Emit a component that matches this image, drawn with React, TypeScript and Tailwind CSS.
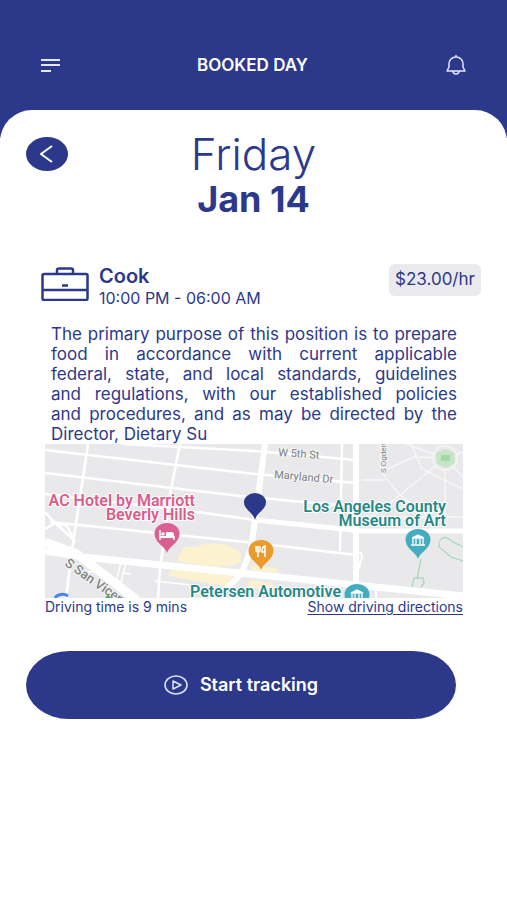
import type { ReactNode } from 'react'

type Job = {
    title: string
    hours: string
    rate: string
    description: string
    driving: string
}

const job: Job = {
    title: 'Cook',
    hours: '10:00 PM - 06:00 AM',
    rate: '$23.00/hr',
    description:
        'The primary purpose of this position is to prepare food in accordance with current applicable federal, state, and local standards, guidelines and\u00a0regulations, with our established policies and\u00a0procedures, and as may be directed by the Director, Dietary Su',
    driving: 'Driving time is 9 mins',
}

function Pin({ x, y, color, children }: { x: number; y: number; color: string; children?: ReactNode }) {
    return (
        <g transform={`translate(${x} ${y})`}>
            <path d="M0 18C-2 11-12.500 8-12.500-1.500A12.500 10.500 0 0 1 12.500-1.500C12.500 8 2 11 0 18Z" fill={color} />
            {children}
        </g>
    )
}

function Museum() {
    return (
        <g fill="none" stroke="#fff" strokeWidth="1.300">
            <path d="M-6-3 0-6 6-3Z" fill="#fff" />
            <path d="M-5-2V4M-2-2V3M2-2V3M5-2V4M-7 4H7" />
        </g>
    )
}

function AreaMap() {
    return (
        <svg viewBox="0 0 418 154" className="block w-full overflow-hidden bg-[#e9e9eb]" role="img" aria-label="Map">
            {/* Points of interest area */}
            <path d="M139 103H152C158 98 183 99 188 104C198 106 199 118 190 121L174 123 134 118C130 113 136 111 139 103Z" fill="#fcf2d0" />
            <path d="M127 123 190 130 180 142 123 132ZM205 121 232 124 234 129 206 126ZM205 136 228 139V146L202 143Z" fill="#fcf2d0" />

            {/* Side streets */}
            <g fill="none" stroke="#fff" strokeWidth="2.500">
                <path d="M78 0 210 7 311 16M0 6 210 30 311 39M0 29 195 52 311 63M0 50 152 68 210 76M5 78 210 99 311 111" />
                <path d="M43 0 27 106 21 154M135 0 125 50 115 125 113 154M297 0 295 107" />
                <path d="M0 68 10 79 28 95M10 79 0 85M10 79 22 82 30 98" />
                <path d="M76 118 71 139M81 119 75 142M78 129 86 130M110 137 154 142M30 130 52 127" strokeWidth="1.500" />
                <path d="M311 108C318 107 318 113 315 119C315 124 314 126 311 126M331 142V154" strokeWidth="2" />
            </g>
            <g fill="none" stroke="#f6f6f7" strokeWidth="1.500">
                <path d="M400 14 361 0M400 14 355 51 336 28V0M400 14 418 33M400 14V73M400 14 418 8M400 14 369 13 336 28M355 51 311 85M355 51 384 73M317 36 340 36M311 73H418M366 0 377 25 418 45" />
            </g>
            <circle cx="400" cy="14" r="12" fill="#e9e9eb" stroke="#f6f6f7" strokeWidth="1.500" />
            <path d="M391 9 400 5 409 9 410 19 401 24 392 20Z" fill="#c5e5c6" />
            <path d="M396 11H405V17H396Z" fill="#a6d8aa" />

            {/* Main roads */}
            <g fill="none" stroke="#fff" strokeLinejoin="round">
                <path d="M0 98 32 110 92 156" strokeWidth="9" />
                <path d="M0 107 38 113 205 130 418 152" strokeWidth="7" />
                <path d="M220 0 210 76 206 104 197 129 179 147" strokeWidth="6" />
                <path d="M210 76 318 87H418" strokeWidth="5" />
                <path d="M311 0V146" strokeWidth="6" />
            </g>
            <g fill="none" stroke="#a9d9bb" strokeWidth="1.300">
                <path d="M376 115 372 135M369 134H378L379 139 376 143M369 134 367 143" />
                <path d="M418 117 406 113 394 103C393 96 398 91 404 95C409 100 412 99 418 103" />
            </g>

            {/* Street names */}
            <g fontFamily="Roboto, sans-serif" fill="#808285" stroke="#f4f4f4" strokeWidth="2" paintOrder="stroke" fontSize="11">
                <text transform="translate(233 12) rotate(4)">W 5th St</text>
                <text transform="translate(229 34) rotate(5)">Maryland Dr</text>
                <text transform="translate(341 29) rotate(-90)" fontSize="8">S Ogden</text>
                <text transform="translate(19 121) rotate(35)" fontSize="13" fontWeight="500">S San Vicente</text>
            </g>

            {/* Place names */}
            <g fontFamily="Roboto, sans-serif" fontWeight="600" fontSize="16" stroke="#fff" strokeWidth="2" paintOrder="stroke">
                <g fill="#d95d8b" textAnchor="end">
                    <text x="150" y="62">AC Hotel by Marriott</text>
                    <text x="150" y="76">Beverly Hills</text>
                </g>
                <g fill="#278886" textAnchor="end">
                    <text x="401" y="68">Los Angeles County</text>
                    <text x="401" y="82">Museum of Art</text>
                    <text x="296" y="153">Petersen Automotive</text>
                </g>
            </g>

            <Pin x={122} y={91} color="#dc5f91">
                <path d="M-7-5V5M7 5V1" fill="none" stroke="#fff" strokeWidth="1.500" />
                <path d="M-7 1H7V3H-7ZM-1-3H4Q7-3 7 0V1H-1Z" fill="#fff" />
                <circle cx="-4" cy="-1" r="1.800" fill="#fff" />
            </Pin>
            <Pin x={216} y={108} color="#e99b2d">
                <path d="M-5-6V-2Q-5 0-3 0T-1-2V-6M-3-6V5M4 5V-6Q1-5 1 0H4" fill="none" stroke="#fff" strokeWidth="1.500" />
            </Pin>
            <Pin x={373} y={97} color="#45acc0"><Museum /></Pin>
            <Pin x={312} y={152} color="#45acc0"><Museum /></Pin>
            <path d="M210 76C208 68 199 66 199 58A11 9 0 0 1 221 58C221 66 212 68 210 76Z" fill="#2c398b" />
            <path d="M10 154A8 6 0 0 1 23 152" fill="none" stroke="#4b83ed" strokeWidth="3" />
            <path d="M60 154 63 150 66 154Z" fill="#4bad65" />
        </svg>
    )
}

export default function App() {
    return (
        <div className="min-h-screen bg-white font-['Inter',sans-serif] text-[#2c398b]">
            {/* Header */}
            <header className="flex h-[138px] items-start justify-between bg-[#2c398b] px-10 pt-[53px] text-white">
                <button type="button" aria-label="Menu" className="flex h-6 items-center">
                    <svg width="20" height="16" viewBox="0 0 20 16" stroke="#e4e8ff" strokeWidth="2">
                        <path d="M1 3H20M1 8H20M1 14H11" />
                    </svg>
                </button>
                <h1 className="text-[17px] leading-6 font-semibold">BOOKED DAY</h1>
                <button type="button" aria-label="Notifications" className="flex h-6 items-center">
                    <svg width="22" height="20" viewBox="0 0 22 20" fill="none" stroke="#e4e8ff" strokeWidth="1.500" strokeLinejoin="round">
                        <path d="M2 16 4 12V9C4 5 7 2 11 2S18 5 18 9V12L20 16ZM11 2V0M8 16C8 20 14 20 14 16" />
                    </svg>
                </button>
            </header>

            <main className="-mt-7 rounded-t-[32px] bg-white pt-6">
                {/* Date */}
                <div className="grid grid-cols-[42px_1fr_42px] px-[26px]">
                    <button type="button" aria-label="Back" className="mt-[3px] flex h-[34px] items-center justify-center rounded-[50%] bg-[#2c398b]">
                        <svg width="14" height="18" viewBox="0 0 14 18" fill="none" stroke="#fff" strokeWidth="2">
                            <path d="M12 1 1 9 12 17" />
                        </svg>
                    </button>
                    <div className="text-center">
                        <p className="text-[44px] leading-10 font-light">Friday</p>
                        <p className="text-4xl leading-[50px] font-bold">Jan 14</p>
                    </div>
                </div>

                {/* Job */}
                <section className="mt-10 flex items-start pr-[26px] pl-[41px]">
                    <svg width="48" height="34" viewBox="0 0 48 34" fill="none" stroke="#2c398b" strokeWidth="2.500" strokeLinejoin="round" className="mt-[3px]">
                        <rect x="1.500" y="7" width="45" height="26" rx="1.500" />
                        <path d="M16 7V3Q16 1.500 18 1.500H30Q32 1.500 32 3V7M2 23H46M21 18.500H27" />
                    </svg>
                    <div className="ml-[10px] grow">
                        <h2 className="text-xl leading-6 font-semibold">{job.title}</h2>
                        <p className="text-base leading-5">{job.hours}</p>
                    </div>
                    <span className="flex h-8 w-[92px] items-center justify-center rounded-md bg-[#e9e9ee] text-[17px]">{job.rate}</span>
                </section>

                <p className="mt-4 mr-[50px] ml-[51px] text-justify text-[17px] leading-5">{job.description}</p>

                {/* Map */}
                <section className="mr-[44px] ml-[45px]">
                    <AreaMap />
                    <div className="flex justify-between text-sm leading-[18px]">
                        <span>{job.driving}</span>
                        <a href="#directions" className="underline decoration-1 underline-offset-2">Show driving directions</a>
                    </div>
                </section>

                <div className="mt-[35px] mr-[51px] ml-[26px]">
                    <button type="button" className="flex h-[68px] w-full items-center justify-center gap-3 rounded-[10%/50%] bg-[#2c398b] text-white">
                        <svg width="24" height="20" viewBox="0 0 24 20" fill="none" stroke="#dfe4ff" strokeWidth="1.500" strokeLinejoin="round">
                            <ellipse cx="12" cy="10" rx="11" ry="9" />
                            <path d="M9 6V14L17 10Z" />
                        </svg>
                        <span className="text-lg leading-6 font-semibold">Start tracking</span>
                    </button>
                </div>
            </main>
        </div>
    )
}
